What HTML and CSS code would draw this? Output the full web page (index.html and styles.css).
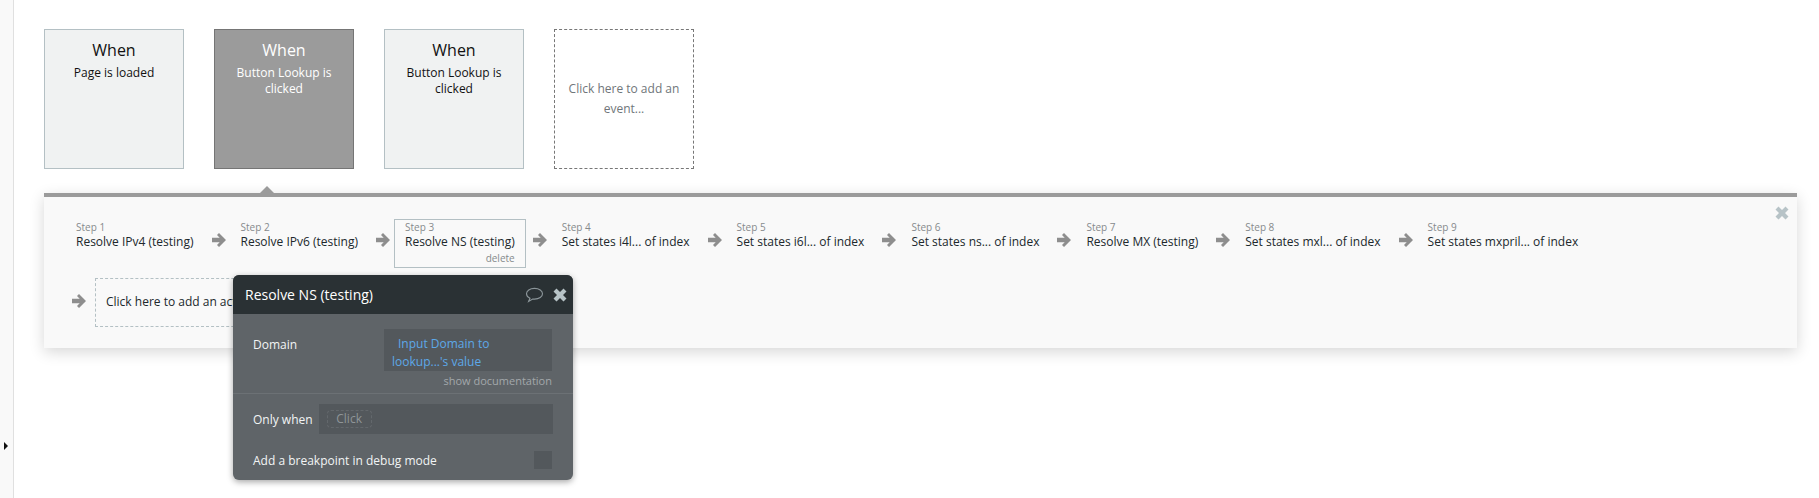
FILE: index.html

```html
<!DOCTYPE html>
<html lang="en">
<head>
  <meta charset="UTF-8">
  <title>Workflow</title>
  <link rel="stylesheet" href="styles.css">
</head>
<body>
<svg class="icons">
  <symbol id="icon-arrow" viewBox="0 0 25 16"><path d="M14 1 21 8 14 15 12 13 14.700 10.300H7V5.700H14.700L12 3z"/></symbol>
  <symbol id="icon-close" viewBox="0 0 14 14"><path d="M3.500 .5 7 4 10.500 .5 13.500 3.500 10 7 13.500 10.500 10.500 13.500 7 10 3.500 13.500 .5 10.500 4 7 .5 3.500z"/></symbol>
</svg>

<div class="sidebar">
  <span class="sidebar-toggle"></span>
</div>

<div class="main">
  <div class="events">
    <div class="event">
      <div class="event-title">When</div>
      <div class="event-text">Page is loaded</div>
    </div>
    <div class="event selected">
      <div class="event-title">When</div>
      <div class="event-text">Button Lookup is clicked</div>
    </div>
    <div class="event">
      <div class="event-title">When</div>
      <div class="event-text">Button Lookup is clicked</div>
    </div>
    <div class="event add-event">Click here to add an event...</div>
  </div>

  <div class="panel">
    <span class="notch"></span>
    <svg class="panel-close"><use href="#icon-close"/></svg>

    <div class="steps">
      <div class="step"><div class="step-num">Step 1</div><div class="step-name">Resolve IPv4 (testing)</div></div>
      <svg class="arrow"><use href="#icon-arrow"/></svg>
      <div class="step"><div class="step-num">Step 2</div><div class="step-name">Resolve IPv6 (testing)</div></div>
      <svg class="arrow"><use href="#icon-arrow"/></svg>
      <div class="step active"><div class="step-num">Step 3</div><div class="step-name">Resolve NS (testing)</div><div class="step-delete">delete</div></div>
      <svg class="arrow"><use href="#icon-arrow"/></svg>
      <div class="step"><div class="step-num">Step 4</div><div class="step-name">Set states i4l... of index</div></div>
      <svg class="arrow"><use href="#icon-arrow"/></svg>
      <div class="step"><div class="step-num">Step 5</div><div class="step-name">Set states i6l... of index</div></div>
      <svg class="arrow"><use href="#icon-arrow"/></svg>
      <div class="step"><div class="step-num">Step 6</div><div class="step-name">Set states ns... of index</div></div>
      <svg class="arrow"><use href="#icon-arrow"/></svg>
      <div class="step"><div class="step-num">Step 7</div><div class="step-name">Resolve MX (testing)</div></div>
      <svg class="arrow"><use href="#icon-arrow"/></svg>
      <div class="step"><div class="step-num">Step 8</div><div class="step-name">Set states mxl... of index</div></div>
      <svg class="arrow"><use href="#icon-arrow"/></svg>
      <div class="step"><div class="step-num">Step 9</div><div class="step-name">Set states mxpril... of index</div></div>
    </div>

    <div class="steps add-row">
      <svg class="arrow"><use href="#icon-arrow"/></svg>
      <div class="add-action">Click here to add an action...</div>
    </div>

    <div class="popup">
      <div class="popup-head">
        <span class="popup-title">Resolve NS (testing)</span>
        <svg class="popup-comment" viewBox="0 0 20 17"><path d="M10 1.500C5 1.500 1.500 4 1.500 7.200 1.500 9.300 3 11 5.200 12L3.800 15.300 8 12.800C8.700 12.900 9.300 12.900 10 12.900 15 12.900 18.500 10.400 18.500 7.200 18.500 4 15 1.500 10 1.500Z"/></svg>
        <svg class="popup-close"><use href="#icon-close"/></svg>
      </div>
      <div class="popup-section">
        <div class="field-row">
          <div class="field-label">Domain</div>
          <div class="field-value"><span class="field-indent"></span>Input Domain to lookup...'s value</div>
        </div>
        <div class="show-doc">show documentation</div>
      </div>
      <div class="popup-section lower">
        <div class="when-row">
          <span class="when-label">Only when</span>
          <div class="when-input"><span class="when-chip">Click</span></div>
        </div>
        <div class="break-row">
          <span>Add a breakpoint in debug mode</span>
          <span class="checkbox"></span>
        </div>
      </div>
    </div>
  </div>
</div>
</body>
</html>
```

FILE: styles.css

```css
* { box-sizing: border-box; }
html, body { height: 100%; }
body {
  margin: 0;
  display: flex;
  background: #fff;
  color: #20282c;
  font-family: 'Open Sans', sans-serif;
  font-size: 12px;
  overflow: hidden;
}
.icons { display: none; }

.sidebar {
  width: 14px;
  flex: none;
  position: relative;
  background: #f9f9f9;
  border-right: 1px solid #e0e0e0;
}
.sidebar-toggle {
  position: absolute;
  left: 4px;
  top: 442px;
  border-left: 4px solid #111;
  border-top: 4px solid transparent;
  border-bottom: 4px solid transparent;
}

.main {
  flex: 1;
  padding: 29px 22px 0 30px;
}

.events { display: flex; gap: 30px; }
.event {
  width: 140px;
  height: 140px;
  padding: 9px 8px;
  background: #f0f2f2;
  border: 1px solid #b4c0c4;
  text-align: center;
  line-height: 16px;
  color: #111;
}
.event-title {
  font-size: 16px;
  line-height: 22px;
  margin-bottom: 4px;
}
.event.selected {
  background: #9b9b9b;
  border-color: #757575;
  color: #fff;
}
.add-event {
  display: flex;
  align-items: center;
  padding: 0 12px;
  background: #fff;
  border: 1px dashed #777;
  color: #70767a;
  line-height: 20px;
  justify-content: center;
}

.panel {
  position: relative;
  height: 155px;
  margin-top: 24px;
  padding: 22px 21px;
  background: #f9f9f9;
  border-top: 4px solid #9b9b9b;
  box-shadow: 0 4px 14px rgba(0, 0, 0, 0.16);
}
.notch {
  position: absolute;
  left: 216px;
  top: -11px;
  border-left: 7px solid transparent;
  border-right: 7px solid transparent;
  border-bottom: 7px solid #9b9b9b;
}
.panel-close {
  position: absolute;
  right: 8px;
  top: 9px;
  width: 14px;
  height: 14px;
  fill: #b7c3c7;
}

.steps { display: flex; align-items: flex-start; }
.add-row { margin-top: 10px; align-items: center; }
.step {
  height: 49px;
  padding: 1px 10px 0;
  border: 1px solid transparent;
  white-space: nowrap;
}
.step.active { border-color: #b4c0c4; }
.step-num {
  font-size: 10px;
  line-height: 13px;
  color: #868a8c;
}
.step-name { line-height: 16px; color: #20282c; }
.step-delete {
  font-size: 10px;
  line-height: 13px;
  margin-top: 2px;
  color: #868a8c;
  text-align: right;
}
.arrow {
  flex: none;
  width: 25px;
  height: 16px;
  margin-top: 13px;
  fill: #8e8e8e;
}
.add-row .arrow { margin: -4px 5px 0 0; }
.add-action {
  width: 220px;
  height: 49px;
  padding-left: 10px;
  line-height: 45px;
  border: 1px dashed #b4c0c4;
}

.popup {
  position: absolute;
  left: 189px;
  top: 78px;
  width: 340px;
  height: 205px;
  background: #5f6468;
  border-radius: 6px;
  box-shadow: 0 2px 6px rgba(0, 0, 0, 0.35);
  color: #f2f4f5;
  overflow: hidden;
}
.popup-head {
  display: flex;
  align-items: center;
  height: 39px;
  padding: 0 6px 0 12px;
  background: #2a3134;
}
.popup-title { flex: 1; font-size: 14px; color: #fff; }
.popup-comment {
  width: 19px;
  height: 16px;
  fill: none;
  stroke: #8b9599;
  stroke-width: 1.2;
  margin-right: 9px;
}
.popup-close { width: 14px; height: 14px; fill: #b7c3c7; }

.popup-section { padding: 15px 21px 0 20px; height: 80px; border-bottom: 1px solid #6c7175; }
.field-row { display: flex; justify-content: space-between; }
.field-label { line-height: 32px; }
.field-value {
  width: 168px;
  height: 42px;
  padding: 6px 8px 0;
  line-height: 18px;
  background: #53585c;
  color: #5da8e8;
}
.field-indent { display: inline-block; width: 6px; }
.show-doc {
  margin-top: 1px;
  font-size: 11px;
  line-height: 18px;
  text-align: right;
  color: #a3a8ab;
}

.popup-section.lower { padding-top: 10px; height: auto; border: 0; }
.when-row { display: flex; align-items: center; gap: 6px; }
.when-input {
  flex: 1;
  height: 30px;
  padding-top: 6px;
  padding-left: 8px;
  margin-right: -1px;
  background: #53585c;
}
.when-chip {
  display: inline-block;
  width: 45px;
  height: 18px;
  line-height: 16px;
  text-align: center;
  border: 1px dashed #63686c;
  border-radius: 4px;
  color: #8f9598;
}
.break-row {
  display: flex;
  align-items: center;
  justify-content: space-between;
  margin-top: 17px;
}
.checkbox {
  width: 18px;
  height: 18px;
  background: #53585c;
}
```
